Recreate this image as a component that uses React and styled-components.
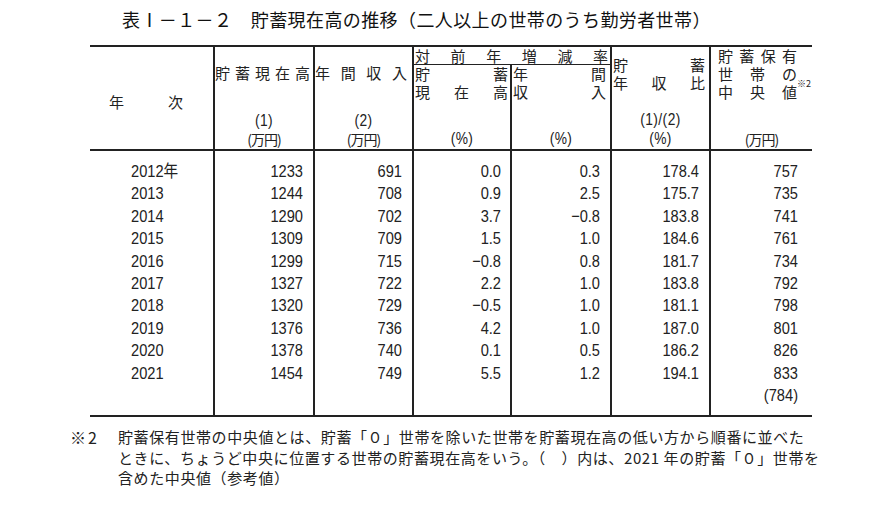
import styled, { createGlobalStyle } from 'styled-components';

const COLS = '123px 100px 99px 98px 100px 99px 103px';
const LINE = '#222';

const years = ['2012年', '2013', '2014', '2015', '2016', '2017', '2018', '2019', '2020', '2021'];

const bodyCols = [
  { key: 'year', align: 'left', padL: 41, padR: 0, values: years },
  { key: 'saving', align: 'right', padL: 0, padR: 10, values: ['1233', '1244', '1290', '1309', '1299', '1327', '1320', '1376', '1378', '1454'] },
  { key: 'income', align: 'right', padL: 0, padR: 10, values: ['691', '708', '702', '709', '715', '722', '729', '736', '740', '749'] },
  { key: 'savingRate', align: 'right', padL: 0, padR: 9, values: ['0.0', '0.9', '3.7', '1.5', '−0.8', '2.2', '−0.5', '4.2', '0.1', '5.5'] },
  { key: 'incomeRate', align: 'right', padL: 0, padR: 10, values: ['0.3', '2.5', '−0.8', '1.0', '0.8', '1.0', '1.0', '1.0', '0.5', '1.2'] },
  { key: 'ratio', align: 'right', padL: 0, padR: 10, values: ['178.4', '175.7', '183.8', '184.6', '181.7', '183.8', '181.1', '187.0', '186.2', '194.1'] },
  { key: 'median', align: 'right', padL: 0, padR: 14, values: ['757', '735', '741', '761', '734', '792', '798', '801', '826', '833', '(784)'] },
];

const GlobalStyle = createGlobalStyle`
  body {
    margin: 0;
    background: #fff;
    color: #222;
    font-family: "Noto Sans CJK JP", sans-serif;
  }
`;

function Spread({ text, mark, ...rest }) {
  const chars = [...text];
  return (
    <SpreadLine {...rest}>
      {chars.map((c, i) => (
        <Char key={i}>
          {c}
          {mark && i === chars.length - 1 && <Sup>{mark}</Sup>}
        </Char>
      ))}
    </SpreadLine>
  );
}

export default function App() {
  return (
    <Page>
      <GlobalStyle />
      <Title>表Ⅰ－１－２　貯蓄現在高の推移（二人以上の世帯のうち勤労者世帯）</Title>
      <Table>
        <Head>
          <HeadCell $col="1" $noLine $top={46}>
            <Spread text="年次" $l={19} $r={30} />
          </HeadCell>
          <HeadCell $col="2" $top={17}>
            <Spread text="貯蓄現在高" $l={0} $r={3} />
            <Bottom>
              <Unit>(1)</Unit>
              <Unit $cjk>(万円)</Unit>
            </Bottom>
          </HeadCell>
          <HeadCell $col="3" $top={17}>
            <Spread text="年間収入" $l={0} $r={5} />
            <Bottom>
              <Unit>(2)</Unit>
              <Unit $cjk>(万円)</Unit>
            </Bottom>
          </HeadCell>
          <GroupCell>
            <Spread text="対前年増減率" $l={1} $r={2} $h={17} />
          </GroupCell>
          <HeadCell $col="4" $row="2">
            <Spread text="貯蓄" $l={1} $r={2} />
            <Spread text="現在高" $l={1} $r={2} />
            <Bottom>
              <Unit>(%)</Unit>
            </Bottom>
          </HeadCell>
          <HeadCell $col="5" $row="2">
            <Spread text="年間" $l={1} $r={4} />
            <Spread text="収入" $l={1} $r={4} />
            <Bottom>
              <Unit>(%)</Unit>
            </Bottom>
          </HeadCell>
          <HeadCell $col="6" $top={9}>
            <Spread text="貯蓄" $l={1} $r={4} />
            <Spread text="年収比" $l={1} $r={4} />
            <Bottom>
              <Unit $h={20}>(1)/(2)</Unit>
              <Unit>(%)</Unit>
            </Bottom>
          </HeadCell>
          <HeadCell $col="7" $top={0}>
            <Spread text="貯蓄保有" $l={7} $r={15} />
            <Spread text="世帯の" $l={7} $r={15} />
            <Spread text="中央値" mark="※2" $l={7} $r={15} />
            <Bottom>
              <Unit $cjk>(万円)</Unit>
            </Bottom>
          </HeadCell>
        </Head>
        <Body>
          {bodyCols.map((col, i) => (
            <BodyCol key={col.key} $noLine={i === 0} $l={col.padL} $r={col.padR} $align={col.align}>
              {col.values.map((v, j) => (
                <Value key={j} $align={col.align}>{v}</Value>
              ))}
            </BodyCol>
          ))}
        </Body>
      </Table>
      <Note>
        <Mark>※2</Mark>
        <NoteText>
          <span>貯蓄保有世帯の中央値とは、貯蓄「０」世帯を除いた世帯を貯蓄現在高の低い方から順番に並べた</span>
          <span>ときに、ちょうど中央に位置する世帯の貯蓄現在高をいう。（　）内は、2021 年の貯蓄「０」世帯を</span>
          <span>含めた中央値（参考値）</span>
        </NoteText>
      </Note>
    </Page>
  );
}

const Page = styled.div`
  width: 870px;
  padding-top: 7px;
`;

const Title = styled.h1`
  margin: 0 0 0 122px;
  font-size: 18px;
  font-weight: 400;
  line-height: 24px;
  letter-spacing: 0.4px;
  color: #111;
`;

const Table = styled.div`
  width: 722px;
  margin: 14px 0 0 90px;
  border-top: 2px solid ${LINE};
  border-bottom: 2px solid ${LINE};
`;

const Head = styled.div`
  display: grid;
  grid-template-columns: ${COLS};
  grid-template-rows: 18px 84px;
  border-bottom: 2px solid ${LINE};
`;

const HeadCell = styled.div`
  grid-column: ${(p) => p.$col};
  grid-row: ${(p) => p.$row || '1 / 3'};
  display: flex;
  flex-direction: column;
  padding: ${(p) => p.$top || 0}px 0 1px 0;
  border-left: ${(p) => (p.$noLine ? 'none' : `2px solid ${LINE}`)};
  font-size: 15px;
`;

const GroupCell = styled.div`
  grid-column: 4 / 6;
  grid-row: 1;
  box-sizing: border-box;
  border-left: 2px solid ${LINE};
  border-bottom: 1px solid ${LINE};
  font-size: 15px;
`;

const SpreadLine = styled.div`
  display: flex;
  justify-content: space-between;
  height: ${(p) => p.$h || 18}px;
  line-height: ${(p) => p.$h || 18}px;
  padding: 0 ${(p) => p.$r}px 0 ${(p) => p.$l}px;
`;

const Char = styled.span`
  position: relative;
`;

const Sup = styled.span`
  position: absolute;
  left: 100%;
  top: -5px;
  font-size: 9px;
  line-height: 12px;
  white-space: nowrap;
`;

const Bottom = styled.div`
  margin-top: auto;
`;

const Unit = styled.div`
  height: ${(p) => p.$h || 18}px;
  line-height: ${(p) => p.$h || 18}px;
  text-align: center;
  white-space: nowrap;
  font-family: ${(p) => (p.$cjk ? '"Noto Sans CJK JP", sans-serif' : '"Liberation Sans", "Noto Sans CJK JP", sans-serif')};
  font-size: ${(p) => (p.$cjk ? 14 : 16)}px;
  letter-spacing: ${(p) => (p.$cjk ? '-1px' : '0.5px')};
  transform: ${(p) => (p.$cjk ? 'none' : 'scaleX(0.86)')};
`;

const Body = styled.div`
  display: grid;
  grid-template-columns: ${COLS};
`;

const BodyCol = styled.div`
  padding: 10px ${(p) => p.$r}px 8px ${(p) => p.$l}px;
  border-left: ${(p) => (p.$noLine ? 'none' : `2px solid ${LINE}`)};
  text-align: ${(p) => p.$align};
`;

const Value = styled.div`
  height: 22.4px;
  line-height: 22.4px;
  font-family: "Liberation Sans", "Noto Sans CJK JP", sans-serif;
  font-size: 17px;
  white-space: nowrap;
  transform: scaleX(0.86);
  transform-origin: ${(p) => p.$align} center;
`;

const Note = styled.div`
  display: flex;
  margin: 10px 0 0 70px;
  font-size: 15px;
  line-height: 20.5px;
`;

const Mark = styled.div`
  width: 48px;
  flex: none;
  font-size: 16px;
  letter-spacing: 2px;
`;

const NoteText = styled.div`
  display: flex;
  flex-direction: column;
  letter-spacing: 0.6px;
  white-space: nowrap;
`;
